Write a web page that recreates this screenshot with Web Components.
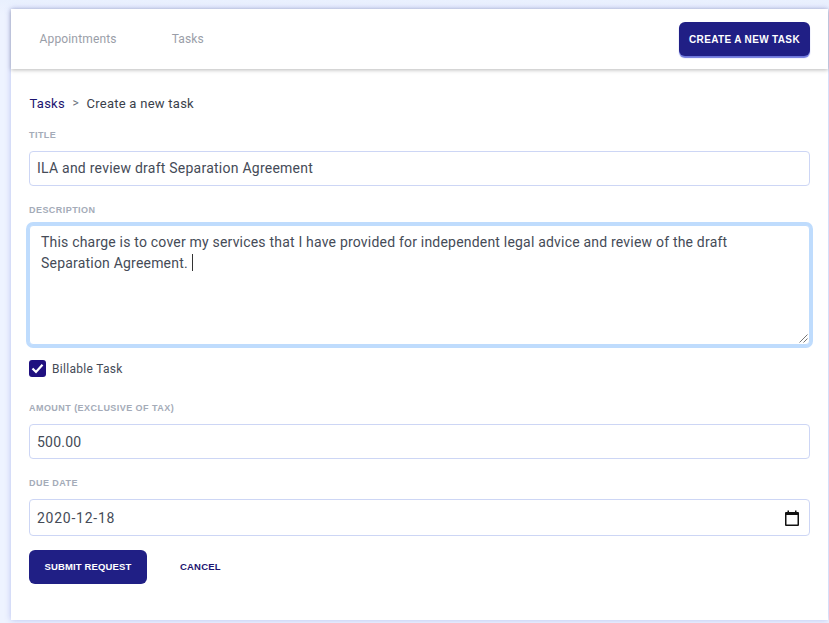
<!DOCTYPE html>
<html><head><meta charset="utf-8">
<style>
html,body{margin:0;height:100%}
body{background:#fff;font-family:Roboto,"Liberation Sans",sans-serif;overflow:hidden}
</style></head>
<body>
<task-page>
  <top-bar slot="top">
    <nav-link>Appointments</nav-link>
    <nav-link>Tasks</nav-link>
    <app-button slot="action" variant="raised">CREATE A NEW TASK</app-button>
  </top-bar>
  <bread-crumb current="Create a new task">Tasks</bread-crumb>
  <form-field label="TITLE" style="--after:19px;--h:35px;--pb:1px">ILA and review draft Separation Agreement</form-field>
  <area-field label="DESCRIPTION">This charge is to cover my services that I have provided for independent legal advice and review of the draft Separation Agreement.</area-field>
  <check-box>Billable Task</check-box>
  <form-field label="AMOUNT (EXCLUSIVE OF TAX)" style="--after:19px;--h:35px">500.00</form-field>
  <form-field label="DUE DATE" date style="--after:14px;--h:37px">2020-12-18</form-field>
  <form-actions>
    <app-button>SUBMIT REQUEST</app-button>
    <text-button>CANCEL</text-button>
  </form-actions>
</task-page>
<script>
function def(name, html){
  customElements.define(name, class extends HTMLElement{
    connectedCallback(){
      if(this.shadowRoot) return;
      const r=this.attachShadow({mode:'open'});
      r.innerHTML=typeof html==='function'?html(this):html;
    }
  });
}
def('task-page',`<style>
:host{display:block;height:623px;box-sizing:border-box;padding:9px 1px 3px 11px;background:linear-gradient(#e9f0fe,#eef3ff 15px,#eef3ff);}
.card{background:#fff;height:100%;box-shadow:0 0 6px rgba(120,130,220,.45);display:flex;flex-direction:column}
.body{padding:24px 18px 0 18px;display:flex;flex-direction:column}
</style><div class="card"><slot name="top"></slot><div class="body"><slot></slot></div></div>`);
def('top-bar',`<style>
:host{display:flex;align-items:center;box-sizing:border-box;height:60px;padding:0 18px 0 28.5px;background:#fff;box-shadow:0 1px 4px rgba(0,0,0,.28);gap:55px;position:relative}
.sp{flex:1}
</style><slot></slot><span class="sp"></span><slot name="action"></slot>`);
def('nav-link',`<style>:host{display:block;font-size:12px;letter-spacing:.16px;color:#9a9ea8}</style><slot></slot>`);
def('app-button',`<style>
:host{display:inline-flex;align-items:center;justify-content:center;box-sizing:border-box;height:34px;border-radius:6px;background:#201f85;color:#fff;font:700 9.5px "Liberation Sans",Arial,sans-serif;letter-spacing:.15px;padding:0 10px 1px;min-width:118px}
:host([variant=raised]){width:131px;box-shadow:0 2px 1px #6f78dc;font-size:10px;letter-spacing:.35px;padding:0 10px}
</style><slot></slot>`);
def('text-button',`<style>:host{display:inline-block;color:#1c1470;font:700 9.5px "Liberation Sans",Arial,sans-serif;letter-spacing:.2px;padding-bottom:2px}</style><slot></slot>`);
def('bread-crumb',(e)=>`<style>
:host{display:flex;align-items:center;height:20px;margin-bottom:17px;font-size:13px;letter-spacing:.26px;color:#3a3f4b;padding-left:.5px}
.l{color:#1c1470}.s{margin:0 7.5px;color:#6b7280;font-size:12px}
</style><span class="l"><slot></slot></span><span class="s">&gt;</span><span>${e.getAttribute('current')}</span>`);
const label=`.lab{font:700 9px "Liberation Sans",Arial,sans-serif;letter-spacing:.45px;color:#a4abb8;height:11px;line-height:11px;margin-bottom:10px}`;
def('form-field',(e)=>`<style>
:host{display:block;padding-bottom:var(--after,19px)}
${label}
.box{box-sizing:border-box;height:var(--h,35px);border:1px solid #cdd6f5;border-radius:4px;display:flex;align-items:center;padding:0 7px var(--pb,0);font-size:14px;letter-spacing:${e.hasAttribute('date')?'.75px':'.24px'};color:#454b57;background:#fff}
.t{flex:1}svg{display:block;margin-right:2px}
</style><div class="lab">${e.getAttribute('label')}</div><div class="box"><span class="t"><slot></slot></span>${e.hasAttribute('date')?`<svg width="16" height="16" viewBox="0 0 16 16"><path fill="#111" d="M3.5 0.5h1.5v1.5h6V0.5h1.5V2H14a1 1 0 0 1 1 1v12a1 1 0 0 1-1 1H2a1 1 0 0 1-1-1V3a1 1 0 0 1 1-1h1.5z"/><rect x="2.5" y="5" width="11" height="9.5" fill="#fff"/></svg>`:''}</div>`);
def('area-field',(e)=>`<style>
:host{display:block;padding-bottom:16px}
${label}
.lab{margin-bottom:9px}
.box{position:relative;box-sizing:border-box;height:120px;border:1px solid #bfdcfd;box-shadow:0 0 0 3px #bfdcfd;border-radius:4px;padding:6px 11px;font-size:14px;line-height:21px;letter-spacing:.2px;color:#454b57;background:#fff}
.c{display:inline-block;width:1px;height:17px;background:#333;vertical-align:-3px;margin-left:4px}
svg{position:absolute;right:1px;bottom:1px}
</style><div class="lab">${e.getAttribute('label')}</div><div class="box"><slot></slot><span class="c"></span>
<svg width="9" height="9" viewBox="0 0 9 9"><path d="M0.5 8.5L8.5 0.5M4.5 8.5L8.5 4.5" stroke="#777" stroke-width="1" fill="none"/></svg></div>`);
def('check-box',`<style>
:host{display:flex;align-items:center;gap:6px;height:17px;font-size:12px;letter-spacing:.3px;color:#454b57;margin-top:-1px;margin-bottom:26px}
.b{width:17px;height:17px;border-radius:3px;background:#201080;display:flex;align-items:center;justify-content:center}
</style><span class="b"><svg width="13" height="11" viewBox="0 0 13 11"><path d="M1.5 5.5L5 9L11.5 1.8" stroke="#fff" stroke-width="2.2" fill="none"/></svg></span><span><slot></slot></span>`);
def('form-actions',`<style>:host{display:flex;align-items:center;gap:33px}</style><slot></slot>`);
</script>
</body></html>
